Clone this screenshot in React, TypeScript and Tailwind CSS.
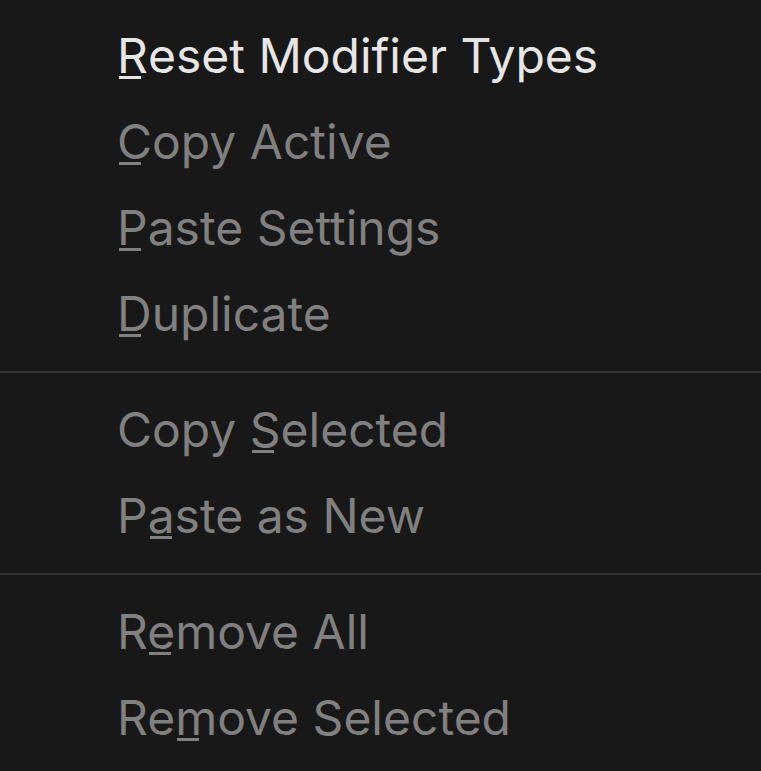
import React from "react";

type Item = { pre: string; u: string; post: string; active?: boolean };

const groups: Item[][] = [
  [
    { pre: "", u: "R", post: "eset Modifier Types", active: true },
    { pre: "", u: "C", post: "opy Active" },
    { pre: "", u: "P", post: "aste Settings" },
    { pre: "", u: "D", post: "uplicate" },
  ],
  [
    { pre: "Copy ", u: "S", post: "elected" },
    { pre: "P", u: "a", post: "ste as New" },
  ],
  [
    { pre: "R", u: "e", post: "move All" },
    { pre: "Re", u: "m", post: "ove Selected" },
  ],
];

function Row({ it }: { it: Item }) {
  return (
    <div
      className={`h-[86px] flex items-center pl-[117px] whitespace-nowrap ${
        it.active ? "text-[#e6e6e6]" : "text-[#808080]"
      }`}
    >
      <span className="text-[48px] leading-none">
        {it.pre}
        <span className="relative">
          {it.u}
          <span className="absolute left-[2px] top-[50px] w-[22px] h-[3px] bg-current" />
        </span>
        {it.post}
      </span>
    </div>
  );
}

export default function App() {
  return (
    <div
      className="w-[761px] h-[771px] bg-[#181818] pt-[13px] overflow-hidden"
      style={{ fontFamily: "Inter, 'Noto Sans', sans-serif" }}
    >
      {groups.map((g, gi) => (
        <React.Fragment key={gi}>
          {gi > 0 && (
            <div className="h-[30px] flex items-center">
              <div className="w-full h-[2px] bg-[#333333]" />
            </div>
          )}
          {g.map((it, i) => (
            <Row key={i} it={it} />
          ))}
        </React.Fragment>
      ))}
    </div>
  );
}
